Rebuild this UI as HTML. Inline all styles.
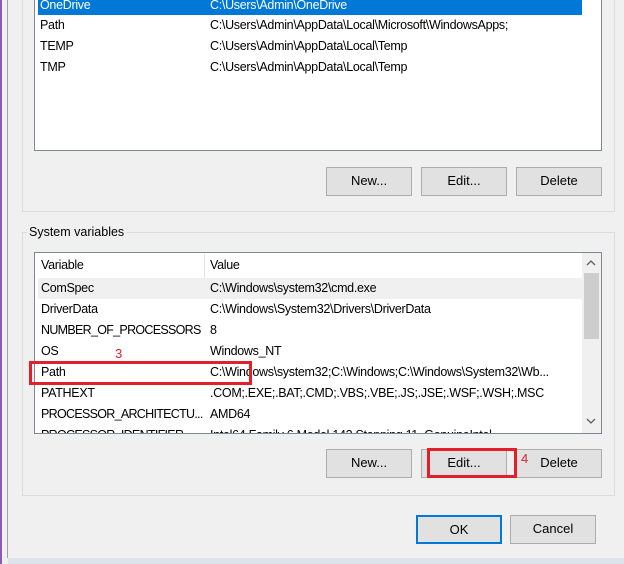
<!DOCTYPE html><html><head><style>
body{margin:0;width:624px;height:564px;background:#f0f0f0;position:relative;overflow:hidden;font-family:"Liberation Sans",sans-serif;font-size:12.5px;color:#000}
.a{position:absolute}
.btn{position:absolute;background:#e1e1e1;border:1px solid #adadad;box-sizing:border-box;text-align:center;line-height:26px;font-size:13px}
.grp{position:absolute;border:1px solid #dcdcdc;box-sizing:border-box}
.list{position:absolute;background:#fff;border:1px solid #828790;box-sizing:border-box}
.row{position:absolute;height:21px;line-height:21px;white-space:nowrap;letter-spacing:-0.3px}
.v{width:166px;overflow:hidden}
.red{position:absolute;border:3px solid #e0202a;box-sizing:border-box}
</style></head><body>
<div class="a" style="left:0;top:0;width:2px;height:564px;background:#8a5cb0"></div>
<div class="a" style="left:7px;top:0;width:1px;height:558px;background:#a0a0a0"></div>
<div class="a" style="left:8px;top:558px;width:616px;height:6px;background:#dde3ea"></div>
<div class="grp" style="left:22px;top:-2px;width:593px;height:214px"></div>
<div class="list" style="left:34px;top:-2px;width:568px;height:153px"></div>
<div class="a" style="left:38px;top:0;width:544px;height:15px;background:#0078d7"></div>
<div class="row" style="left:40px;top:-5px;color:#fff">OneDrive</div>
<div class="row" style="left:210px;top:-5px;color:#fff">C:\Users\Admin\OneDrive</div>
<div class="row" style="left:40px;top:15px">Path</div><div class="row" style="left:210px;top:15px">C:\Users\Admin\AppData\Local\Microsoft\WindowsApps;</div>
<div class="row" style="left:40px;top:36px">TEMP</div><div class="row" style="left:210px;top:36px">C:\Users\Admin\AppData\Local\Temp</div>
<div class="row" style="left:40px;top:57px">TMP</div><div class="row" style="left:210px;top:57px">C:\Users\Admin\AppData\Local\Temp</div>
<div class="btn" style="left:326px;top:167px;width:86px;height:29px">New...</div>
<div class="btn" style="left:421px;top:167px;width:86px;height:29px">Edit...</div>
<div class="btn" style="left:516px;top:167px;width:86px;height:29px">Delete</div>
<div class="grp" style="left:22px;top:232px;width:593px;height:264px"></div>
<div class="a" style="left:27px;top:224px;padding:0 2px;background:#f0f0f0;line-height:16px">System variables</div>
<div class="list" style="left:34px;top:252px;width:568px;height:182px;overflow:hidden">
<div class="a" style="left:169px;top:1px;width:1px;height:24px;background:#e5e5e5"></div>
<div class="row" style="left:6px;top:2px">Variable</div><div class="row" style="left:175px;top:2px">Value</div>
<div class="a" style="left:3px;top:25px;width:544px;height:21px;background:#f0f0f0"></div>
<div class="row" style="left:6px;top:25px">ComSpec</div><div class="row" style="left:175px;top:25px">C:\Windows\system32\cmd.exe</div>
<div class="row" style="left:6px;top:46px">DriverData</div><div class="row" style="left:175px;top:46px">C:\Windows\System32\Drivers\DriverData</div>
<div class="row v" style="left:6px;top:67px;letter-spacing:-0.7px">NUMBER_OF_PROCESSORS</div><div class="row" style="left:175px;top:67px">8</div>
<div class="row" style="left:6px;top:88px">OS</div><div class="row" style="left:175px;top:88px">Windows_NT</div>
<div class="row" style="left:6px;top:109px">Path</div><div class="row" style="left:175px;top:109px">C:\Windows\system32;C:\Windows;C:\Windows\System32\Wb...</div>
<div class="row" style="left:6px;top:130px">PATHEXT</div><div class="row" style="left:175px;top:130px">.COM;.EXE;.BAT;.CMD;.VBS;.VBE;.JS;.JSE;.WSF;.WSH;.MSC</div>
<div class="row v" style="left:6px;top:151px;letter-spacing:-0.7px">PROCESSOR_ARCHITECTU...</div><div class="row" style="left:175px;top:151px">AMD64</div>
<div class="row v" style="left:6px;top:172px;letter-spacing:-0.7px">PROCESSOR_IDENTIFIER</div><div class="row" style="left:175px;top:172px">Intel64 Family 6 Model 142 Stepping 11, GenuineIntel</div>
<div class="a" style="left:547px;top:0;width:19px;height:180px;background:#f0f0f0"></div>
<div class="a" style="left:549px;top:20px;width:15px;height:66px;background:#cdcdcd"></div>
<svg class="a" style="left:550px;top:6px" width="12" height="8"><path d="M2 6 L6 2 L10 6" stroke="#606060" stroke-width="1.3" fill="none"/></svg>
<svg class="a" style="left:550px;top:164px" width="12" height="8"><path d="M2 2 L6 6 L10 2" stroke="#606060" stroke-width="1.3" fill="none"/></svg>
</div>
<div class="red" style="left:29px;top:361px;width:223px;height:24px"></div>
<div class="a" style="left:115px;top:346px;color:#e0202a;font-size:13px">3</div>
<div class="btn" style="left:326px;top:449px;width:86px;height:29px">New...</div>
<div class="btn" style="left:421px;top:449px;width:86px;height:29px">Edit...</div>
<div class="btn" style="left:516px;top:449px;width:86px;height:29px">Delete</div>
<div class="red" style="left:427px;top:448px;width:90px;height:30px"></div>
<div class="a" style="left:521px;top:451px;color:#e0202a;font-size:13px">4</div>
<div class="btn" style="left:416px;top:515px;width:86px;height:29px;border:2px solid #0078d7;line-height:25px">OK</div>
<div class="btn" style="left:510px;top:515px;width:86px;height:29px">Cancel</div>
</body></html>
